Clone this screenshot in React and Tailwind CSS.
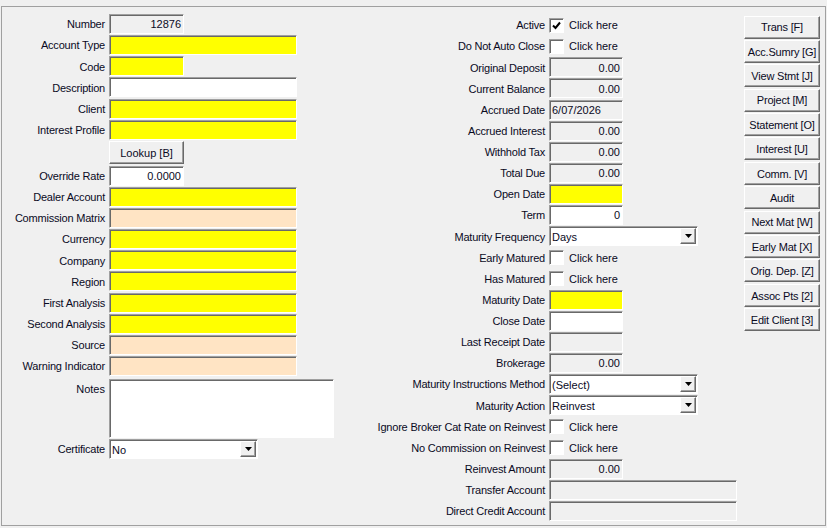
import React from "react";

const sunken =
  "border border-t-[#a0a0a0] border-l-[#a0a0a0] border-b-white border-r-white shadow-[inset_1px_1px_0_#696969]";
const raised =
  "border border-t-white border-l-white border-b-[#696969] border-r-[#696969] shadow-[inset_-1px_-1px_0_#a0a0a0] bg-[#f0f0f0]";

const bgs = {
  yellow: "bg-[#ffff00]",
  peach: "bg-[#ffe4c4]",
  white: "bg-white",
  gray: "bg-[#f0f0f0]",
};

const Field = ({ w, bg = "white", value, left }) => (
  <div
    className={`${sunken} ${bgs[bg]} ${w} h-[20px] flex items-center px-[2px] pt-[1px] ${
      left ? "justify-start" : "justify-end"
    }`}
  >
    {value}
  </div>
);

const Arrow = () => (
  <div className={`${raised} w-[16px] h-[16px] flex items-center justify-center`}>
    <svg width="7" height="4" viewBox="0 0 7 4">
      <path d="M0 0h7L3.5 4z" fill="#000" />
    </svg>
  </div>
);

const Select = ({ w, value }) => (
  <div className={`${sunken} bg-white ${w} h-[20px] flex items-center pl-[2px] pr-[1px]`}>
    <span className="flex-1 pt-[2px]">{value}</span>
    <Arrow />
  </div>
);

const Check = ({ checked }) => (
  <div className="flex items-center gap-[5px]">
    <div className={`${sunken} bg-white w-[15px] h-[15px] flex items-center justify-center`}>
      {checked && (
        <svg width="9" height="9" viewBox="0 0 9 9">
          <path d="M1 4.5l2.5 2.5L8 1.5" fill="none" stroke="#000" strokeWidth="2" />
        </svg>
      )}
    </div>
    <span className="pt-[1px]">Click here</span>
  </div>
);

const Row = ({ label, labelW, children, h = "h-[21.13px]" }) => (
  <div className={`flex items-center gap-[4px] ${h}`}>
    <div className={`${labelW} text-right whitespace-nowrap tracking-[-0.2px] pt-[1px]`}>{label}</div>
    {children}
  </div>
);

const leftRows = [
  ["Account Type", "w-[188px]", "yellow"],
  ["Code", "w-[75px]", "yellow"],
  ["Description", "w-[188px]", "white"],
  ["Client", "w-[188px]", "yellow"],
  ["Interest Profile", "w-[188px]", "yellow"],
];

const leftRows2 = [
  ["Dealer Account", "yellow"],
  ["Commission Matrix", "peach"],
  ["Currency", "yellow"],
  ["Company", "yellow"],
  ["Region", "yellow"],
  ["First Analysis", "yellow"],
  ["Second Analysis", "yellow"],
  ["Source", "peach"],
  ["Warning Indicator", "peach"],
];

const midRows = [
  ["Active", { check: true, checked: true }],
  ["Do Not Auto Close", { check: true }],
  ["Original Deposit", { bg: "gray", value: "0.00" }],
  ["Current Balance", { bg: "gray", value: "0.00" }],
  ["Accrued Date", { bg: "gray", value: "6/07/2026", left: true }],
  ["Accrued Interest", { bg: "gray", value: "0.00" }],
  ["Withhold Tax", { bg: "gray", value: "0.00" }],
  ["Total Due", { bg: "gray", value: "0.00" }],
  ["Open Date", { bg: "yellow" }],
  ["Term", { bg: "white", value: "0" }],
  ["Maturity Frequency", { select: "Days" }],
  ["Early Matured", { check: true }],
  ["Has Matured", { check: true }],
  ["Maturity Date", { bg: "yellow" }],
  ["Close Date", { bg: "white" }],
  ["Last Receipt Date", { bg: "gray" }],
  ["Brokerage", { bg: "gray", value: "0.00" }],
  ["Maturity Instructions Method", { select: "(Select)" }],
  ["Maturity Action", { select: "Reinvest" }],
  ["Ignore Broker Cat Rate on Reinvest", { check: true }],
  ["No Commission on Reinvest", { check: true }],
  ["Reinvest Amount", { bg: "gray", value: "0.00" }],
  ["Transfer Account", { bg: "gray", wide: true }],
  ["Direct Credit Account", { bg: "gray", wide: true }],
];

const buttons = [
  "Trans [F]",
  "Acc.Sumry [G]",
  "View Stmt [J]",
  "Project [M]",
  "Statement [O]",
  "Interest [U]",
  "Comm. [V]",
  "Audit",
  "Next Mat [W]",
  "Early Mat [X]",
  "Orig. Dep. [Z]",
  "Assoc Pts [2]",
  "Edit Client [3]",
];

export default function App() {
  return (
    <div className="w-[827px] h-[528px] bg-[#f0f0f0] pt-[6px] pl-[1px] text-[11px] text-[#0a0a1e] font-['Liberation_Sans',Arial,sans-serif] overflow-hidden">
      <div className="w-[825px] h-[520px] border border-[#a0a0a0] flex">
        {/* left column */}
        <div className="w-[340px] pt-[6.5px]">
          <Row label="Number" labelW="w-[103px]">
            <Field w="w-[75px]" bg="gray" value="12876" />
          </Row>
          {leftRows.map(([label, w, bg]) => (
            <Row key={label} label={label} labelW="w-[103px]">
              <Field w={w} bg={bg} />
            </Row>
          ))}
          <Row label="" labelW="w-[103px]" h="h-[25px]">
            <button className={`${raised} w-[75px] h-[23px] flex items-center justify-center pt-[1px]`}>
              Lookup [B]
            </button>
          </Row>
          <Row label="Override Rate" labelW="w-[103px]">
            <Field w="w-[75px]" bg="white" value="0.0000" />
          </Row>
          {leftRows2.map(([label, bg]) => (
            <Row key={label} label={label} labelW="w-[103px]">
              <Field w="w-[188px]" bg={bg} />
            </Row>
          ))}
          <div className="flex gap-[4px] h-[62px]">
            <div className="w-[103px] text-right pt-[4px]">Notes</div>
            <div className={`${sunken} bg-white w-[225px] h-[59px] mt-[2px]`} />
          </div>
          <Row label="Certificate" labelW="w-[103px]">
            <Select w="w-[149px]" value="No" />
          </Row>
        </div>

        {/* middle column */}
        <div className="w-[400px] pt-[7.5px]">
          {midRows.map(([label, o]) => (
            <Row key={label} label={label} labelW="w-[203px]">
              {o.check ? (
                <Check checked={o.checked} />
              ) : o.select ? (
                <Select w="w-[149px]" value={o.select} />
              ) : (
                <Field
                  w={o.wide ? "w-[188px]" : "w-[74px]"}
                  bg={o.bg}
                  value={o.value}
                  left={o.left}
                />
              )}
            </Row>
          ))}
        </div>

        {/* right buttons */}
        <div className="pt-[8.5px] pl-[2px] flex flex-col gap-[1.4px]">
          {buttons.map((b) => (
            <button
              key={b}
              className={`${raised} w-[76px] h-[23px] flex items-center justify-center whitespace-nowrap tracking-[-0.2px] pt-[1px]`}
            >
              {b}
            </button>
          ))}
        </div>
      </div>
    </div>
  );
}
